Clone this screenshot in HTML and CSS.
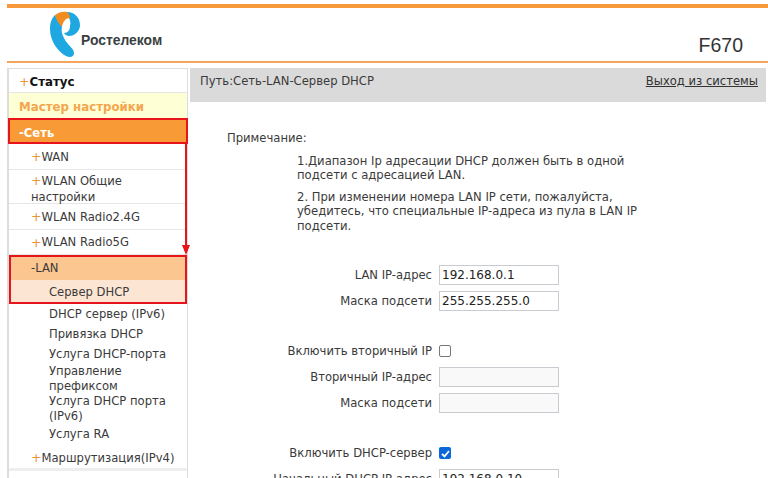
FILE: index.html
```html
<!doctype html>
<html lang="ru">

<head>
  <title>F670</title>
  <meta charset="utf-8" />
  <link rel="stylesheet" href="styles.css">
</head>

<body>
  <header class="top">
    <div class="brand">
      <svg class="logo" width="32" height="48" viewBox="0 0 32 48">
        <path fill="#1ea7e1" d="M6 4C2 8 1 13 1 18C1 30 9 41 17 45C21 47 25 46 25 42C25 37 18 34 15 27C13 23 12 20 13 16Z" />
        <path fill="#1ea7e1" d="M18 1C26 1 31 7 31 14C31 20 26 25 20 25C18 25 16 24 15 22C19 22 21 19 21 15C22 11 21 9 20 7Z" />
        <path fill="#f28c1f" d="M6 4C10 1 14 0 18 1C20 3 21 5 21 7C17 7 14 10 13 16C10 13 7 9 6 4Z" />
      </svg>
      <span class="brand-name">Ростелеком</span>
    </div>
    <div class="model">F670</div>
  </header>

  <div class="layout">
    <nav class="side">
      <div class="item top-item"><span class="plus">+</span><b>Статус</b></div>
      <div class="item wizard">Мастер настройки</div>
      <div class="item net">-Сеть</div>
      <div class="item sub wan"><span class="plus">+</span>WAN</div>
      <div class="item sub tall"><span class="plus">+</span>WLAN Общие настройки</div>
      <div class="item sub wan"><span class="plus">+</span>WLAN Radio2.4G</div>
      <div class="item sub"><span class="plus">+</span>WLAN Radio5G</div>
      <div class="item sub lan">-LAN</div>
      <div class="leaf current">Сервер DHCP</div>
      <div class="leaf">DHCP сервер (IPv6)</div>
      <div class="leaf">Привязка DHCP</div>
      <div class="leaf">Услуга DHCP-порта</div>
      <div class="leaf wrap">Управление префиксом</div>
      <div class="leaf wrap">Услуга DHCP порта (IPv6)</div>
      <div class="leaf">Услуга RA</div>
      <div class="item sub last"><span class="plus">+</span>Маршрутизация(IPv4)</div>

      <div class="mark mark-net"></div>
      <div class="mark mark-lan"></div>
      <div class="mark-line"></div>
      <div class="mark-arrow"></div>
    </nav>

    <main class="main">
      <div class="path">
        <span>Путь:Сеть-LAN-Сервер DHCP</span>
        <a class="logout" href="#">Выход из системы</a>
      </div>

      <section class="note">
        <div class="note-title">Примечание:</div>
        <p>1.Диапазон Ip адресации DHCP должен быть в одной подсети с адресацией LAN.</p>
        <p>2. При изменении номера LAN IP сети, пожалуйста, убедитесь, что специальные IP-адреса из пула в LAN IP подсети.</p>
      </section>

      <form class="form">
        <div class="group">
          <label>LAN IP-адрес</label><input type="text" value="192.168.0.1">
          <label>Маска подсети</label><input type="text" value="255.255.255.0">
        </div>
        <div class="group">
          <label>Включить вторичный IP</label><span class="check"></span>
          <label>Вторичный IP-адрес</label><input class="off" type="text">
          <label>Маска подсети</label><input class="off" type="text">
        </div>
        <div class="group">
          <label>Включить DHCP-сервер</label>
          <span class="check on"><svg width="13" height="13" viewBox="0 0 13 13"><path d="M3 6.800l2.500 2.500L10 4" fill="none" stroke="#fff" stroke-width="1.800" /></svg></span>
          <label>Начальный DHCP IP-адрес</label><input type="text" value="192.168.0.10">
        </div>
      </form>
    </main>
  </div>
</body>

</html>
```

FILE: styles.css
```css
html, body {
  height: 478px;
  overflow: hidden;
}

body {
  margin: 0;
  padding: 4px 0 0 7px;
  box-sizing: border-box;
  background: #fff;
  color: #3a3a3a;
  font-family: "DejaVu Sans", sans-serif;
  font-size: 11.6px;
}

.top {
  display: flex;
  justify-content: space-between;
  height: 53px;
  border-top: 4px solid #f89a3c;
  border-bottom: 2px solid #f5a55c;
}

.brand {
  display: flex;
  align-items: flex-start;
  padding: 3px 0 0 42px;
}

.brand-name {
  margin-top: 21px;
  font-family: "Liberation Sans", sans-serif;
  font-size: 13.9px;
  font-weight: bold;
  color: #3a3f42;
}

.model {
  align-self: flex-end;
  margin: 0 25px 4px 0;
  font-family: "Liberation Sans", sans-serif;
  font-size: 19.5px;
  color: #333;
}

.layout {
  display: flex;
  gap: 2px;
  margin-top: 5px;
}

.side {
  position: relative;
  flex: none;
  width: 181px;
  height: 420px;
  border: 1px solid #ddd;
  border-left: 2px solid #ddd;
  box-sizing: border-box;
}

.item {
  display: flex;
  flex-wrap: wrap;
  align-items: center;
  height: 25px;
  padding-left: 10px;
  border-bottom: 1px solid #e6e6e6;
  box-sizing: border-box;
}

.plus {
  color: #e8963c;
  font-size: 12.500px;
}

.top-item {
  height: 24px;
  padding-top: 2px;
  font-size: 11.800px;
  color: #111;
}

.wizard {
  height: 26px;
  padding-top: 2px;
  background: #ffffd6;
  color: #f4a64f;
  font-size: 11.800px;
  font-weight: bold;
}

.net {
  height: 25px;
  padding-top: 3px;
  background: #f89a35;
  color: #fff;
  font-weight: bold;
}

.sub {
  padding-left: 22px;
}

.wan {
  height: 26px;
}

.tall {
  display: block;
  height: 34px;
  padding: 3px 0 0 22px;
  line-height: 16px;
}

.lan {
  height: 25px;
  background: #fcc690;
  border-bottom: 0;
}

.leaf {
  padding: 3px 8px 2px 40px;
  line-height: 15px;
}

.current {
  background: #fde5d3;
  padding: 5px 8px 4px 40px;
}

.wrap {
  padding: 0 8px 0 40px;
}

.last {
  margin-top: 3px;
  height: 24px;
  border-bottom: 3px solid #eee;
}

.mark {
  position: absolute;
  border: 2px solid #e8141c;
  box-sizing: border-box;
}

.mark-net {
  left: -1px;
  top: 49px;
  width: 180px;
  height: 26px;
}

.mark-lan {
  left: 0;
  top: 186px;
  width: 178px;
  height: 49px;
}

.mark-line {
  position: absolute;
  left: 176px;
  top: 75px;
  width: 2px;
  height: 102px;
  background: #e8141c;
}

.mark-arrow {
  position: absolute;
  left: 173px;
  top: 176px;
  border-left: 4px solid transparent;
  border-right: 4px solid transparent;
  border-top: 10px solid #e8141c;
}

.main {
  flex: 1;
  margin-right: 2px;
}

.path {
  display: flex;
  justify-content: space-between;
  height: 34px;
  padding: 6px 8px 0 10px;
  background: #dadada;
  box-sizing: border-box;
  line-height: 15px;
}

.logout {
  color: #333;
}

.note {
  margin: 29px 0 0 37px;
  line-height: 14.5px;
}

.note p {
  width: 370px;
  margin: 7px 0 0 70px;
}

.note-title {
  margin-bottom: 8px;
}

.note p + p {
  margin-top: 7px;
}

.form {
  margin-top: 32px;
}

.group {
  display: grid;
  grid-template-columns: 242px 120px;
  column-gap: 7px;
  row-gap: 6px;
  align-items: center;
  justify-items: start;
  margin-bottom: 30px;
}

.group label {
  justify-self: end;
}

.group input {
  width: 120px;
  height: 20px;
  margin: 0;
  padding: 1px 2px;
  border: 1px solid #c8ccd0;
  box-sizing: border-box;
  font-family: "DejaVu Sans", sans-serif;
  font-size: 12px;
  color: #222;
}

.group input.off {
  background: #f9f9f9;
}

.check {
  display: block;
  width: 12px;
  height: 12px;
  margin: 4px 0;
  border: 1px solid #777;
  border-radius: 2px;
  box-sizing: border-box;
}

.check.on {
  background: #0a68d8;
  border: 0;
}

.check svg {
  display: block;
}
```
